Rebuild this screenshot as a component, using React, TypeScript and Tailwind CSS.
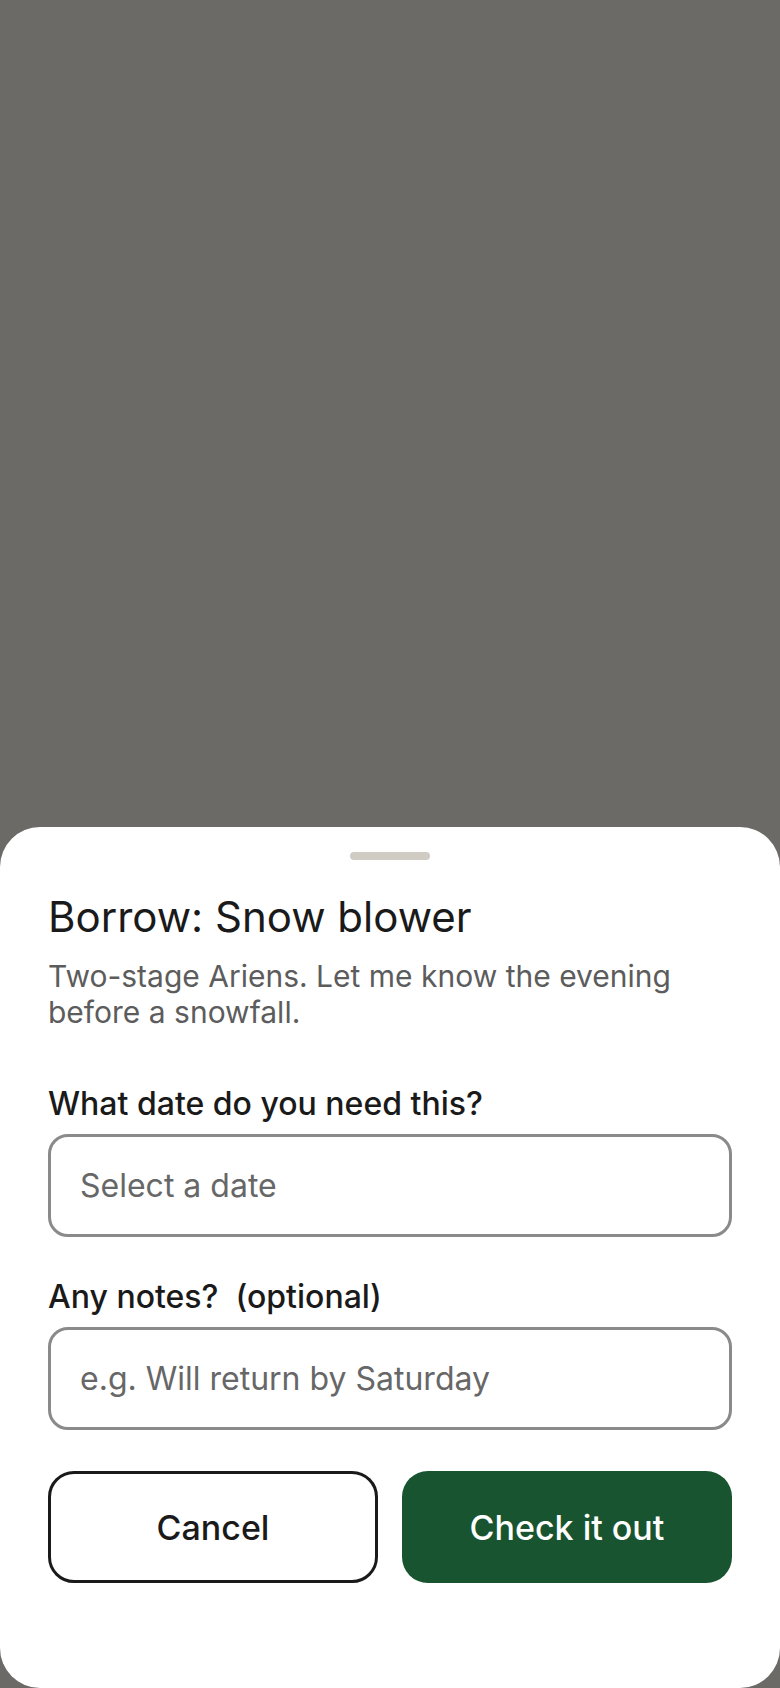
import React from "react";

const font = { fontFamily: "Inter, 'Noto Sans', sans-serif" };

const Field = ({ label, placeholder, className = "" }: { label: React.ReactNode; placeholder: string; className?: string }) => (
  <div className={`flex flex-col ${className}`}>
    <label className="text-[32px] leading-[36px] font-medium text-[#1a1a1a]">{label}</label>
    <div className="mt-3 h-[103px] rounded-[20px] border-[3px] border-[#8a8a8a] flex items-center px-[29px]">
      <span className="text-[32px] leading-[36px] text-[#676767]">{placeholder}</span>
    </div>
  </div>
);

export default function App() {
  return (
    <div className="h-[1688px] w-full bg-[#6b6a66] flex flex-col justify-end" style={font}>
      {/* bottom sheet */}
      <div className="h-[861px] bg-white rounded-[40px] px-12 flex flex-col">
        <div className="mt-[25px] self-center w-20 h-2 rounded-full bg-[#d0ccc3]" />

        <h1 className="mt-[33px] text-[42px] leading-[48px] font-normal text-[#1a1a1a]">Borrow: Snow blower</h1>
        <p className="mt-[17px] text-[30px] leading-[36px] text-[#5c5c5c]">
          Two-stage Ariens. Let me know the evening before a snowfall.
        </p>

        <Field className="mt-[56px]" label="What date do you need this?" placeholder="Select a date" />
        <Field
          className="mt-[42px]"
          label={<>Any notes?&nbsp; (optional)</>}
          placeholder="e.g. Will return by Saturday"
        />

        <div className="mt-[41px] grid grid-cols-2 gap-6">
          <button className="h-[112px] rounded-[26px] border-[3px] border-[#1a1a1a] bg-white text-[34px] font-medium text-[#1a1a1a]">
            Cancel
          </button>
          <button className="h-[112px] rounded-[26px] bg-[#185430] text-[34px] font-medium text-white">
            Check it out
          </button>
        </div>
      </div>
    </div>
  );
}
